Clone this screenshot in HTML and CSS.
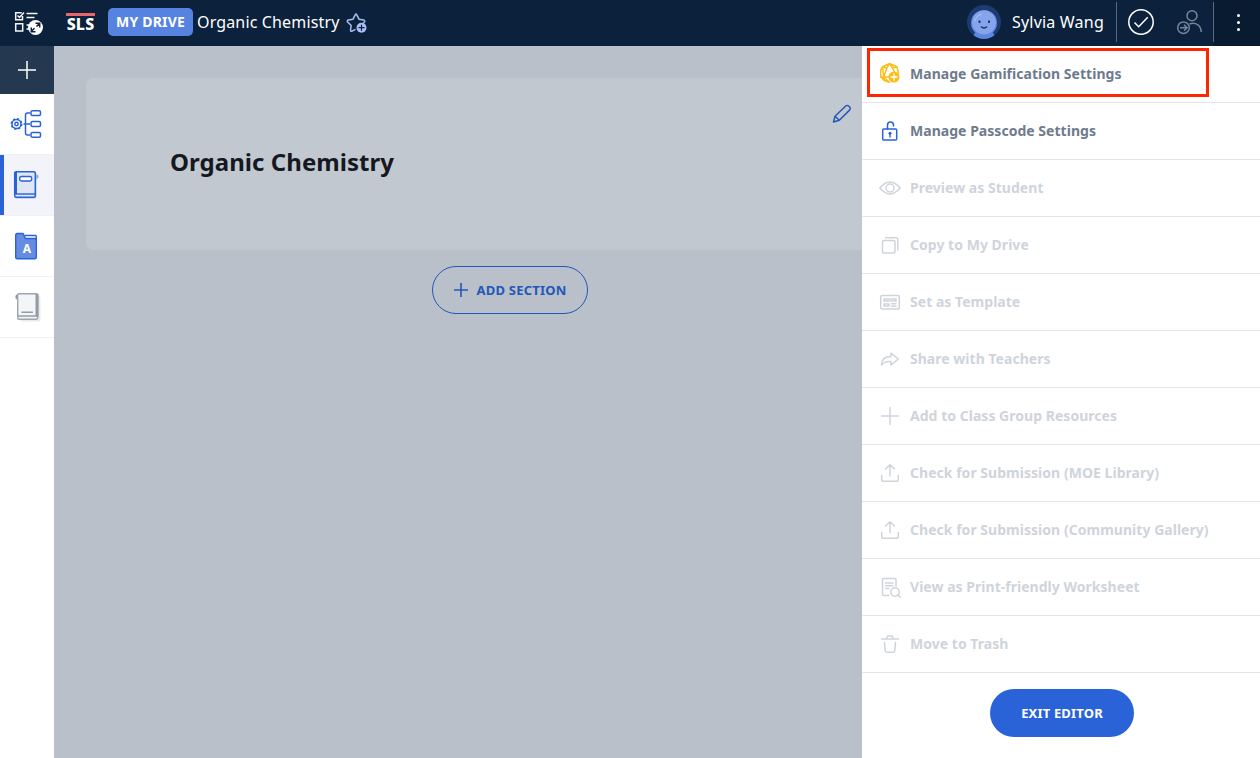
FILE: index.html
```html
<!DOCTYPE html>
<html lang="en">
<head>
<meta charset="utf-8">
<title>Organic Chemistry</title>
<link rel="stylesheet" href="styles.css">
</head>
<body>
<header class="topbar">
  <svg class="tasks" width="30" height="26" viewBox="0 0 30 26" fill="none" stroke="#f4f6fa" stroke-width="1.500"><path d="M8.500 5v3.700H1.700V1.700h6M3.500 4.500l2 2L10 1.500M12.500 2.500h11M12.500 6.500h8M1.700 12.700h7v7.200h-7zM12.500 14h3M12.500 18h3"/><circle cx="21.500" cy="16.500" r="7.500" fill="#fff" stroke="none"/><path d="M18 19.800l2.500-2.500M22.500 15.500l2.500-2.500M17.300 16.500v4.200h4.200M21.500 12.300h4.200v4.200" stroke="#0c213c" stroke-width="1.500"/></svg>
  <div class="logo">SLS</div>
  <span class="drive">MY DRIVE</span>
  <span class="title">Organic Chemistry</span>
  <svg class="star" width="22" height="22" viewBox="0 0 22 22" fill="none" stroke="#a9bff4" stroke-width="1.500" stroke-linejoin="round"><path d="M9.500 17.300L6 19.200q-1.600.5-1.500-1.200l.7-4.500L1.600 10Q.7 8.500 2.300 7.900L7 7.200 9.200 2.800q.8-1.400 1.600 0L13 7.200l4.700.7q1.600.6.7 2.100L17 11.500"/><circle cx="15.500" cy="15.700" r="5" fill="#a9bff4" stroke="none"/><path d="M15.500 12.700v6M12.500 15.700h6" stroke="#0c213c" stroke-width="1.200"/></svg>
  <div class="account">
    <svg class="avatar" width="34" height="34" viewBox="0 0 34 34"><circle cx="17" cy="17" r="17" fill="#1e3b70"/><path d="M8 28h18l1.500 2.300a17 17 0 0 1-21 0z" fill="#5b87e0"/><circle cx="17" cy="18" r="13" fill="#5d88e2"/><circle cx="17" cy="17.500" r="11.900" fill="#85a4ec"/><path d="M7.500 16a10 10 0 0 1 7-7" fill="none" stroke="#b3c7f7"/><path d="M12.500 15.500v2.500M22 15.500v2.500" stroke="#18315f" stroke-width="1.800"/><path d="M14 21.500q3 3 6 0" fill="none" stroke="#18315f" stroke-width="1.300"/></svg>
    <span class="name">Sylvia Wang</span>
  </div>
  <div class="tools">
    <svg width="26" height="26" viewBox="0 0 26 26" fill="none" stroke="#fff" stroke-width="1.500"><circle cx="13" cy="13" r="12.200"/><path d="M6.500 13.500l4.200 4.200 9-9.500"/></svg>
    <svg width="26" height="26" viewBox="0 0 26 26" fill="none" stroke="#76859a" stroke-width="1.500"><circle cx="16" cy="6.700" r="5"/><path d="M13.500 15q3-1.200 6-.4 5.500 1.900 5.700 8.400"/><circle cx="7.500" cy="18.700" r="5.800"/><path d="M4 18.700h7M8 15.700l3 3-3 3"/></svg>
  </div>
  <div class="more"><i></i><i></i><i></i></div>
</header>
<div class="layout">
  <nav class="rail">
    <div class="rail-item add"><svg width="18" height="18" viewBox="0 0 18 18" stroke="#fff" stroke-width="1.500"><path d="M9 0v18M0 9h18"/></svg></div>
    <div class="rail-item shifted"><svg width="32" height="30" viewBox="0 0 32 30" fill="none" stroke="#2a62d8" stroke-width="1.500"><circle cx="6.500" cy="15" r="4.500"/><circle cx="6.500" cy="15" r="5.200" stroke-dasharray="2 2.084"/><circle cx="6.500" cy="15" r="1.700"/><path d="M13.500 15H20M20 4h-2.500q-2 0-2 2v18q0 2 2 2H20"/><rect x="21" y="1.700" width="9.500" height="4.800" rx="1.500"/><rect x="21" y="12.600" width="9.500" height="4.800" rx="1.500"/><rect x="21" y="23.500" width="9.500" height="4.800" rx="1.500"/></svg></div>
    <div class="rail-item active"><svg width="26" height="30" viewBox="0 0 26 30"><path d="M23 5l2 .5v2L23 9" fill="#8aa8ea" stroke="#8aa8ea"/><rect x="2" y="2" width="21.500" height="26.800" rx="2" fill="#bfd0f3"/><rect x="1.700" y="1.700" width="20.600" height="25.600" rx="1.500" fill="#dfe7f6" stroke="#2a62d8" stroke-width="1.500"/><path d="M1 2h3v22H1z" fill="#2a62d8"/><path d="M2 24h20" stroke="#2a62d8" stroke-width="1.400"/><rect x="6.700" y="6.500" width="12" height="4.500" rx="1.700" fill="#fff" stroke="#2a62d8" stroke-width="1.400"/></svg></div>
    <div class="rail-item shifted"><div class="folder"><svg width="24" height="28" viewBox="0 0 24 28"><path d="M12 3h9v5h-9z" fill="#fff"/><path d="M1.700 3q0-1.500 1.500-1.500H9l2.500 5h9.800q1 0 1 1.200v17.500q0 1.500-1.500 1.500H3.200q-1.500 0-1.500-1.500z" fill="#668ce2" stroke="#2a62d8" stroke-width="1.400"/><path d="M10.500 3.500h11q.8 0 .8 1V8" fill="none" stroke="#2a62d8" stroke-width="1.400"/></svg><span>A</span></div></div>
    <div class="rail-item book"><svg width="26" height="30" viewBox="0 0 26 30"><path d="M1 3.500l2-1v5L1 6.500z" fill="#8b95a0" stroke="#8b95a0"/><rect x="5" y="4" width="20.500" height="25.500" rx="2" fill="#e9ecee"/><rect x="2.700" y="1.700" width="20" height="25.600" rx="1.500" fill="#f3f5f7" stroke="#9ca6b0" stroke-width="1.400"/><path d="M20.500 2H23.500v22.500h-3z" fill="#929ca7"/><path d="M3 24h19M6.500 20.300h11.500" stroke="#929ca7" stroke-width="1.400"/></svg></div>
  </nav>
  <main class="canvas">
    <section class="hero">
      <h1>Organic Chemistry</h1>
      <svg width="20" height="20" viewBox="0 0 20 20" fill="none" stroke="#2857b6" stroke-width="1.500" stroke-linejoin="round"><path d="M1.500 18L3 12.300 13.700 2q1.200-1 2.600-.3l1.500 1.500q1 1.400 0 2.700L7.300 16.300zM3 12.300l4.300 4"/></svg>
    </section>
    <button class="add-section"><svg width="14" height="14" viewBox="0 0 14 14" stroke="#2457b8" stroke-width="1.600"><path d="M7 0v14M0 7h14"/></svg><span>ADD SECTION</span></button>
  </main>
  <aside class="menu">
    <div class="menu-item enabled highlighted"><svg class="gold" width="22" height="22" viewBox="0 0 22 22"><path d="M10.500 1.500L18 5l1.500 6M10.500 1.500L3.500 5 1.700 8v7l3.500 3.500 5.300 1.800M3.500 5l4.500 1L10.500 1.500 13.500 6 18 5M8 6L4.500 15l6 5.300M13.500 6l2 4M1.700 15h8M5.200 18.500L3.500 5"/><circle class="disc" cx="15" cy="15" r="5.500"/><path class="cross" d="M15 12v6M12 15h6"/></svg><span>Manage Gamification Settings</span></div>
    <div class="menu-item enabled"><svg width="22" height="22" viewBox="0 0 22 22" class="blue"><rect x="3.700" y="9" width="14" height="11" rx="1"/><path d="M8.500 9V5a3 3 0 0 1 6 0v1"/><circle class="keyhole" cx="11" cy="13.300" r="1.500"/><path class="key" d="M11 13.500v3.500"/></svg><span>Manage Passcode Settings</span></div>
    <div class="menu-item"><svg width="22" height="22" viewBox="0 0 22 22"><path d="M.8 11Q11-.8 21.200 11 11 22.800.8 11z"/><circle cx="11" cy="11" r="4"/></svg><span>Preview as Student</span></div>
    <div class="menu-item"><svg width="22" height="22" viewBox="0 0 22 22"><rect x="3.500" y="6.500" width="12.500" height="12.500" rx="1.500"/><path d="M6.500 3.700H17q1.800 0 1.800 1.800V16"/></svg><span>Copy to My Drive</span></div>
    <div class="menu-item"><svg width="22" height="22" viewBox="0 0 22 22"><rect x="1.700" y="4.500" width="18.600" height="13.500" rx="1.500"/><path d="M5 8h12v2H5zM5 13h5v2H5zM12.500 12.700H17M12.500 15.200H17"/></svg><span>Set as Template</span></div>
    <div class="menu-item"><svg width="22" height="22" viewBox="0 0 22 22"><path d="M12 5l7.300 6L12 17v-3.500Q5.500 13 2.500 17 2.500 8.500 12 8.500z"/></svg><span>Share with Teachers</span></div>
    <div class="menu-item"><svg width="22" height="22" viewBox="0 0 22 22"><path d="M11 2.500v17M2.500 11h17"/></svg><span>Add to Class Group Resources</span></div>
    <div class="menu-item"><svg width="22" height="22" viewBox="0 0 22 22"><path d="M11 14V3M6.500 7L11 2.700 15.500 7M2.700 13.500v4q0 1.800 1.800 1.800h13q1.800 0 1.800-1.800v-4"/></svg><span>Check for Submission (MOE Library)</span></div>
    <div class="menu-item"><svg width="22" height="22" viewBox="0 0 22 22"><path d="M11 14V3M6.500 7L11 2.700 15.500 7M2.700 13.500v4q0 1.800 1.800 1.800h13q1.800 0 1.800-1.800v-4"/></svg><span>Check for Submission (Community Gallery)</span></div>
    <div class="menu-item"><svg width="22" height="22" viewBox="0 0 22 22"><path d="M10 19.500H5q-1.500 0-1.500-1.500V4q0-1.500 1.500-1.500h10.500Q17 2.500 17 4v6M6.500 7H14M6.500 9.700H14M6.500 12.500H10"/><circle cx="16" cy="16" r="4.200"/><path d="M19 19l2.300 2.300"/></svg><span>View as Print-friendly Worksheet</span></div>
    <div class="menu-item"><svg width="22" height="22" viewBox="0 0 22 22"><path d="M2.500 6h17M8 6q0-3 1-3h4q1 0 1 3M5.500 9.500l.7 8q.2 1.700 1.800 1.700h6q1.600 0 1.800-1.700l.7-8"/></svg><span>Move to Trash</span></div>
    <button class="exit">EXIT EDITOR</button>
  </aside>
</div>
</body>
</html>
```
FILE: styles.css
```css
* { box-sizing: border-box; }
body { margin: 0; height: 758px; overflow: hidden; display: flex; flex-direction: column; font-family: "Noto Sans", sans-serif; background: #fff; }
svg { display: block; flex: none; }
button { font-family: inherit; }
.topbar { height: 46px; flex: none; display: flex; align-items: center; background: #0c213c; color: #fff; }
.tasks { margin: 2px 0 0 14px; }
.logo { margin: -2px 0 0 22px; width: 29px; height: 18px; border-top: 3px solid #e96768; font-size: 16px; font-weight: 800; line-height: 16px; text-align: center; letter-spacing: .2px; }
.drive { margin: -2px 0 0 13px; width: 85px; height: 28px; border-radius: 5px; background: #5783e0; font-size: 14px; font-weight: 700; line-height: 28px; text-align: center; letter-spacing: .2px; }
.title { margin: -2px 0 0 4px; width: 143px; font-size: 16px; letter-spacing: .15px; white-space: nowrap; }
.star { margin-left: 6px; }
.account { margin-left: auto; display: flex; align-items: center; height: 46px; }
.name { width: 92px; margin: -2px 12px 0 11px; font-size: 16px; letter-spacing: .2px; white-space: nowrap; }
.avatar { margin-top: -2px; }
.tools { height: 40px; width: 98px; margin-top: -2px; padding: 0 11px; display: flex; align-items: center; justify-content: space-between; border: solid #5a697d; border-width: 0 1px; }
.more { width: 46px; height: 46px; display: flex; flex-direction: column; align-items: center; justify-content: center; gap: 4px; padding: 0 0 2px 3px; background: #091b30; }
.more i { width: 3px; height: 3px; border-radius: 50%; background: #fff; }
.layout { flex: 1; display: flex; min-height: 0; }
.rail { width: 54px; flex: none; }
.rail-item { height: 61px; display: flex; align-items: center; justify-content: center; padding-right: 1px; border-bottom: 1px solid #eef0f3; }
.rail-item.add { height: 48px; padding: 0; background: #243950; border: 0; }
.rail-item.active { background: linear-gradient(to right, #2a62d8 4px, #f2f4f9 4px); padding-right: 3px; }
.rail-item.shifted { padding: 0 2px 1px 0; }
.rail-item.book { padding: 0 0 0 1px; }
.folder { display: grid; place-items: center; }
.folder > * { grid-area: 1 / 1; }
.folder span { color: #fff; font-size: 12px; font-weight: 700; line-height: 14px; margin: 6px 0 0 2px; }
.canvas { flex: 1; background: #b9c0ca; padding: 32px 0 0 32px; min-width: 0; }
.hero { height: 172px; background: #c2c8d0; border-radius: 8px 0 0 8px; display: flex; justify-content: space-between; padding: 26px 10px 0 84px; }
h1 { margin: 40px 0 0; font-size: 24px; line-height: 36px; font-weight: 700; letter-spacing: .05px; color: #15191f; }
.add-section { display: flex; align-items: center; justify-content: center; gap: 9px; width: 156px; height: 48px; margin: 16px 0 0 346px; padding: 0; border: 1px solid #2457b8; border-radius: 24px; background: none; color: #2457b8; font-size: 13px; font-weight: 700; letter-spacing: .2px; }
.menu { width: 398px; flex: none; background: #fff; }
.menu-item { height: 57px; border-bottom: 1px solid #e3e5ea; padding-left: 17px; display: flex; align-items: center; gap: 9px; font-size: 14px; font-weight: 700; letter-spacing: .03px; color: #cfd4db; }
.menu-item span { padding-bottom: 2px; }
.menu-item.enabled { color: #6e7b8d; }
.menu-item svg { fill: none; stroke: #cfd4db; stroke-width: 1.5; stroke-linejoin: round; stroke-linecap: round; }
.menu-item svg.blue { stroke: #2a62d8; }
.blue .key { stroke-width: 1.4; }
.blue .keyhole { fill: #2a62d8; stroke: none; }
.menu-item svg.gold { stroke: #fabe14; margin: -2px 0 0; }
.gold .disc { fill: #fabe14; stroke: none; }
.gold .cross { stroke: #fff; stroke-width: 1.3; }
.menu-item.highlighted { position: relative; }
.highlighted::after { content: ""; position: absolute; box-sizing: border-box; left: 5px; top: 2px; width: 342px; height: 49px; border: 3px solid #fe2600; }
.exit { display: block; width: 144px; height: 48px; margin: 16px auto 0 128px; padding: 0; border: 0; border-radius: 24px; background: #2a62d8; color: #fff; font-size: 13px; font-weight: 700; letter-spacing: .17px; }
```
